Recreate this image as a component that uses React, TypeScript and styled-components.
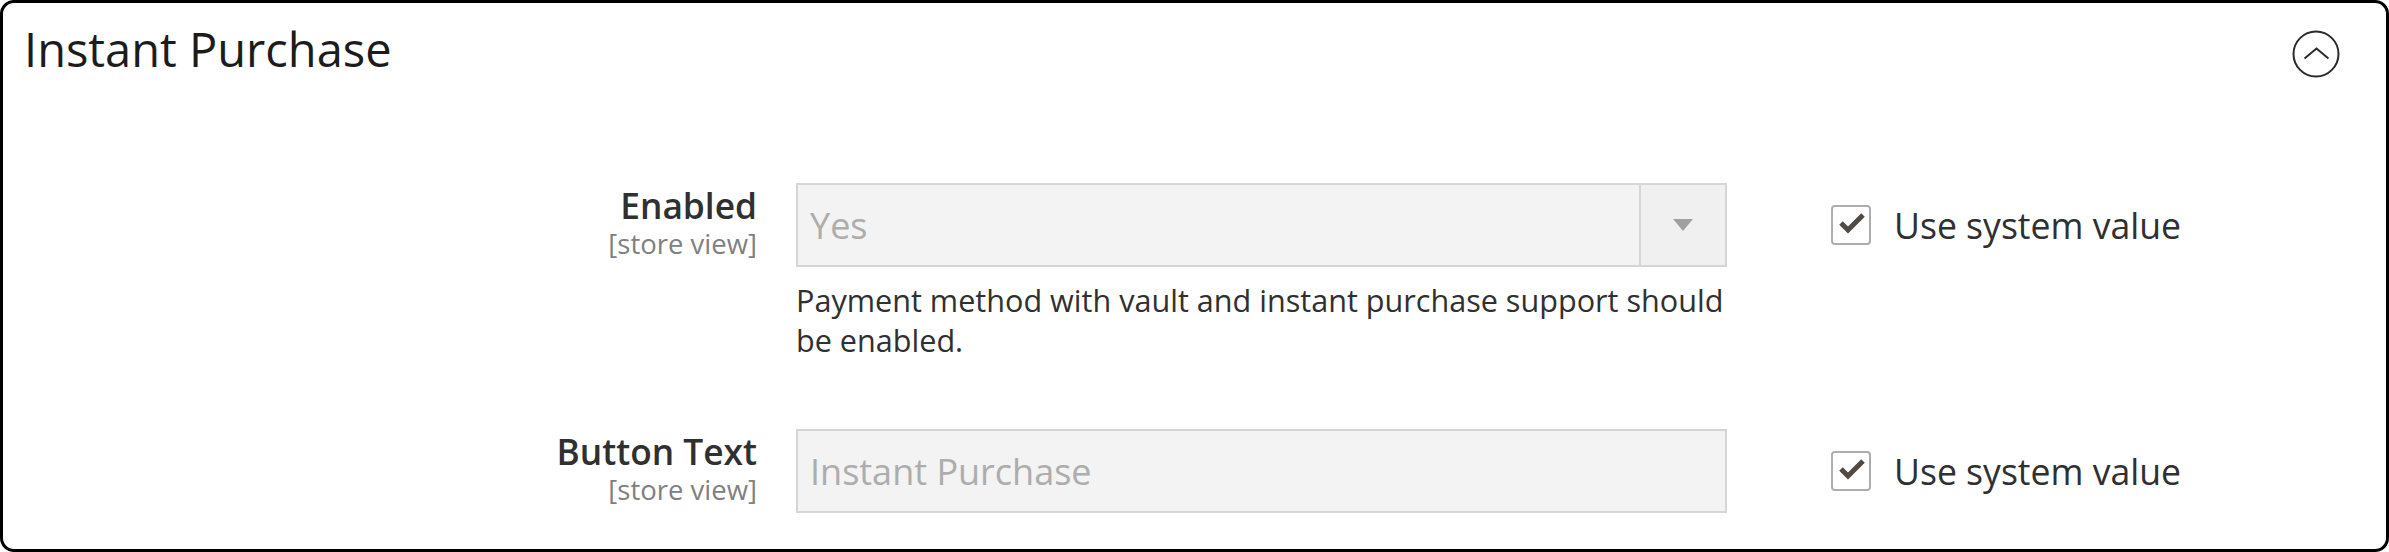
import React from "react";
import styled, { createGlobalStyle } from "styled-components";

const GlobalStyle = createGlobalStyle`
  html, body {
    margin: 0;
    padding: 0;
    background: #fff;
  }
  body {
    font-family: "Open Sans", "Liberation Sans", sans-serif;
    color: #303030;
  }
`;

const Frame = styled.section`
  box-sizing: border-box;
  width: 2389px;
  height: 552px;
  border: 3px solid #000;
  border-radius: 14px;
  background: #fff;
  overflow: hidden;
`;

const Header = styled.header`
  display: flex;
  justify-content: space-between;
  align-items: flex-start;
  padding: 23px 46px 0 21px;
`;

const Title = styled.h2`
  margin: 0;
  font-size: 47px;
  line-height: 46px;
  font-weight: 400;
  color: #1c1c1c;
`;

const Toggle = styled.button`
  margin-top: 4px;
  width: 48px;
  height: 48px;
  padding: 0;
  border: 0;
  background: none;
  cursor: pointer;
  svg {
    display: block;
  }
`;

const Fields = styled.div`
  display: grid;
  row-gap: 69px;
  padding-top: 105px;
`;

const Row = styled.div`
  display: grid;
  grid-template-columns: 754px 931px 1fr;
  column-gap: 39px;
`;

const Label = styled.div`
  padding-top: 1px;
  text-align: right;
  font-size: 35.3px;
  line-height: 43px;
  font-weight: 600;
  color: #303030;
`;

const Scope = styled.div`
  font-size: 27.5px;
  line-height: 33px;
  font-weight: 400;
  color: #808080;
`;

const Control = styled.div`
  display: flex;
  flex-direction: column;
`;

const Box = styled.div`
  box-sizing: border-box;
  display: flex;
  align-items: stretch;
  height: 84px;
  border: 2px solid #d6d6d6;
  background: #f3f3f3;
`;

const Value = styled.span`
  flex: 1;
  display: flex;
  align-items: center;
  padding-left: 12px;
  font-size: 36px;
  color: #adadad;
`;

const ArrowCell = styled.span`
  width: 84px;
  display: flex;
  align-items: center;
  justify-content: center;
  border-left: 2px solid #d6d6d6;
  background: #f0f0f0;
  &::after {
    content: "";
    width: 0;
    height: 0;
    border-left: 10px solid transparent;
    border-right: 10px solid transparent;
    border-top: 12px solid #a39f9c;
  }
`;

const Note = styled.p`
  margin: 13px 0 0;
  font-size: 30.6px;
  line-height: 40px;
  color: #303030;
`;

const Default = styled.label`
  display: flex;
  align-items: center;
  gap: 23px;
  margin-left: 65px;
  padding-top: 22px;
  align-self: start;
  font-size: 35.6px;
  line-height: 40px;
  color: #303030;
`;

const CheckBox = styled.span`
  box-sizing: border-box;
  width: 40px;
  height: 40px;
  border: 2px solid #adadad;
  border-radius: 4px;
  background: #fff;
  svg {
    display: block;
  }
`;

const Check = () => (
  <CheckBox>
    <svg width="36" height="36" viewBox="0 0 36 36">
      <polyline
        points="8,16 15,23 30,8"
        fill="none"
        stroke="#514943"
        strokeWidth="5"
        strokeLinejoin="miter"
      />
    </svg>
  </CheckBox>
);

interface FieldProps {
  label: string;
  value: string;
  select?: boolean;
  note?: string;
}

const Field = ({ label, value, select, note }: FieldProps) => (
  <Row>
    <Label>
      {label}
      <Scope>[store view]</Scope>
    </Label>
    <Control>
      <Box>
        <Value>{value}</Value>
        {select && <ArrowCell />}
      </Box>
      {note && <Note>{note}</Note>}
    </Control>
    <Default>
      <Check />
      Use system value
    </Default>
  </Row>
);

export default function App() {
  return (
    <>
      <GlobalStyle />
      <Frame>
        <Header>
          <Title>Instant Purchase</Title>
          <Toggle aria-label="Collapse">
            <svg width="48" height="48" viewBox="0 0 48 48">
              <circle cx="24" cy="24" r="22.5" fill="none" stroke="#2b2b2b" strokeWidth="2" />
              <polyline
                points="12.5,28.5 24.5,18.5 36.5,28.5"
                fill="none"
                stroke="#2b2b2b"
                strokeWidth="2"
              />
            </svg>
          </Toggle>
        </Header>
        <Fields>
          <Field
            label="Enabled"
            value="Yes"
            select
            note="Payment method with vault and instant purchase support should be enabled."
          />
          <Field label="Button Text" value="Instant Purchase" />
        </Fields>
      </Frame>
    </>
  );
}
